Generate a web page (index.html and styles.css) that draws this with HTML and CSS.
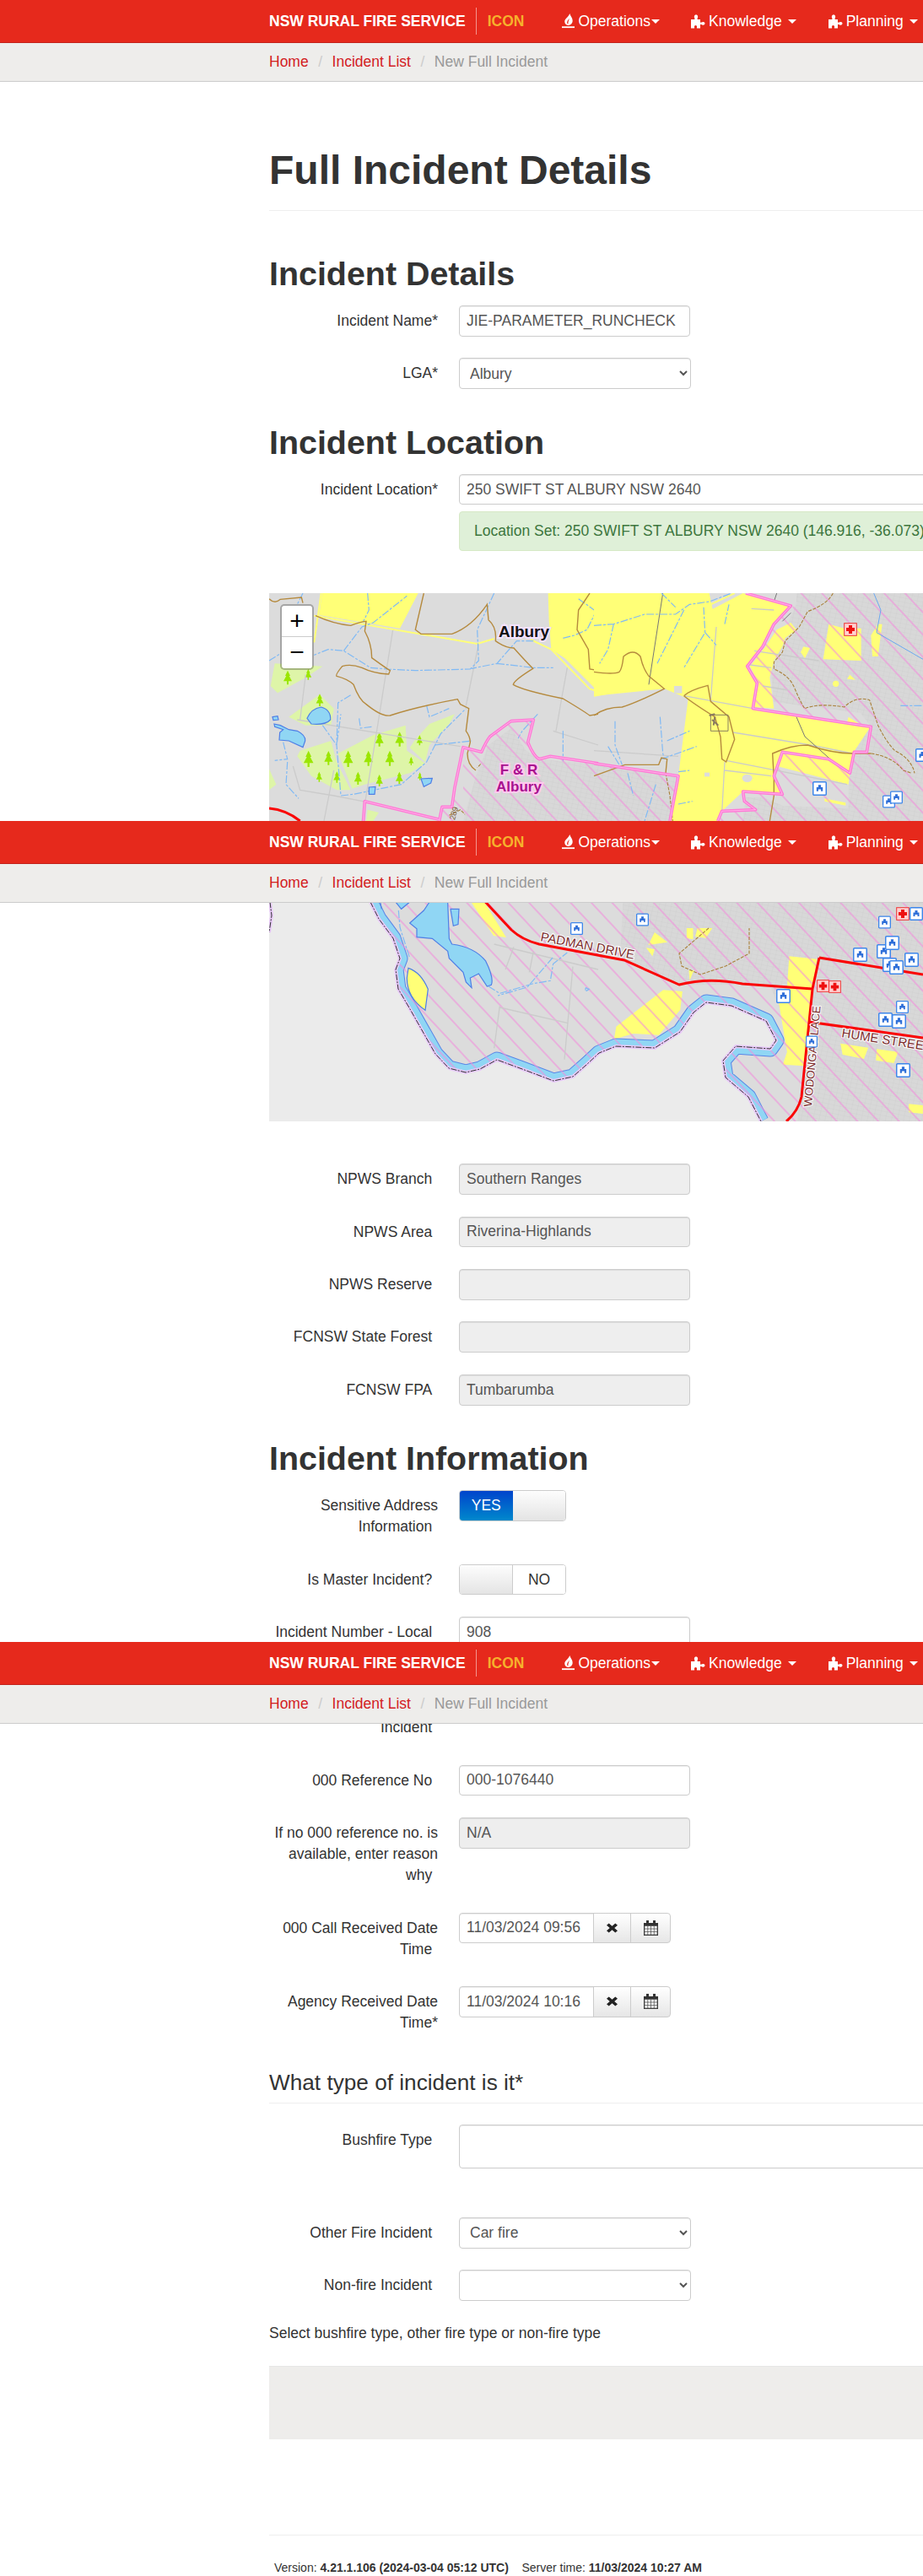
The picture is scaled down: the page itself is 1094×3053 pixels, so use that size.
FILE: index.html
```html
<!DOCTYPE html>
<html lang="en">
<head>
<meta charset="utf-8">
<title>Full Incident Details</title>
<link rel="stylesheet" href="styles.css">
</head>
<body>
<svg class="defs" width="0" height="0">
  <defs>
    <symbol id="flame" viewBox="0 0 16 20" preserveAspectRatio="none"><path fill-rule="evenodd" d="M10 0C10.500 3 13.500 5.500 13.500 9.500 13.500 13 11 15.500 8 15.500 5 15.500 3.500 13 3.500 10.500 3.500 7 8 5 10 0ZM9.500 6.500C8 8.500 6.500 10 6.500 12 6.500 13 7.200 13.800 8 14 7.500 12 8.500 9.500 9.500 6.500Z"/><rect x="0" y="17" width="16" height="2"/></symbol>
    <symbol id="puzzle" viewBox="0 0 17 17"><path d="M0 6H3.500C4.500 6 4.800 5.300 4.300 4.500 3.500 3.300 3.600 0.500 6 0.500S8.500 3.300 7.700 4.500C7.200 5.300 7.500 6 8.500 6H11V9C11 9.800 11.700 10 12.300 9.500 13.500 8.600 16.500 8.600 16.500 10.800S13.500 13 12.300 12.100C11.700 11.600 11 11.800 11 12.600V16.500H7.500C6.700 16.500 6.700 15.800 7 15.200 7.500 14 6.500 13 5.500 13S3.500 14 4 15.200C4.300 15.800 4.300 16.500 3.500 16.500H0Z"/></symbol>
    <symbol id="map-icon" viewBox="0 0 16 16"><rect class="mi-box" x="0.700" y="0.700" width="14.600" height="14.600" rx="1"/><path class="mi-fig" d="M6.500 4H9.500V6.500H11.500V11H9.500V9H6.500V11H4.500V6.500H6.500Z"/></symbol>
    <symbol id="map-red" viewBox="0 0 16 16"><rect class="mr-box" x="0.700" y="0.700" width="14.600" height="14.600"/><path class="mr-cross" d="M6 3H10V6H13V10H10V13H6V10H3V6H6Z"/></symbol>
    <symbol id="tree" viewBox="-16 -26 32 50" overflow="visible"><path class="tree-shape" d="M0-26 9-7H5L15 12H3V24H-3V12H-15L-5-7H-9Z"/></symbol>
  </defs>
</svg>

<header class="topbar">
  <nav class="navbar">
    <a class="brand">NSW RURAL FIRE SERVICE</a>
    <span class="app-name">ICON</span>
    <a class="nav-item nav-ops"><svg class="nav-ic ic-flame"><use href="#flame"/></svg>Operations<i class="caret caret-tight"></i></a>
    <a class="nav-item nav-know"><svg class="nav-ic"><use href="#puzzle"/></svg>Knowledge<i class="caret"></i></a>
    <a class="nav-item nav-plan"><svg class="nav-ic"><use href="#puzzle"/></svg>Planning<i class="caret"></i></a>
  </nav>
  <div class="crumbs"><a>Home</a><span class="sep">/</span><a>Incident List</a><span class="sep">/</span><span class="current">New Full Incident</span></div>
</header>

<main class="page">
  <div class="page-header"><h1>Full Incident Details</h1></div>

  <h2 class="first-h2">Incident Details</h2>
  <div class="row"><label>Incident Name*</label><input class="ctl" value="JIE-PARAMETER_RUNCHECK"></div>
  <div class="row"><label>LGA*</label><select class="ctl sel"><option>Albury</option></select></div>

  <h2>Incident Location</h2>
  <div class="row">
    <label>Incident Location*</label>
    <div class="wide">
      <input class="ctl" value="250 SWIFT ST ALBURY NSW 2640">
      <div class="alert">Location Set: 250 SWIFT ST ALBURY NSW 2640 (146.916, -36.073)</div>
    </div>
  </div>

  <div class="map">
    <svg class="map-svg" width="775" height="626" viewBox="319 703 775 626">
      <defs>
        <pattern id="hatch" patternUnits="userSpaceOnUse" width="18" height="18" patternTransform="rotate(47)"><line class="hatch-line" x1="0" y1="1" x2="18" y2="1"/></pattern>
        <pattern id="mesh" patternUnits="userSpaceOnUse" width="7" height="5" patternTransform="rotate(12)"><rect class="mesh-bg" width="7" height="5"/><path class="mesh-line" d="M0 0H7M0 0V5"/></pattern>
      </defs>
      <rect class="land" x="319" y="703" width="775" height="626"/>

      <!-- top-left tile -->
      <g transform="translate(319 703) scale(.33333)">
        <polygon class="yellow" points="188,0 530,0 465,125 178,78"/>
        <polygon class="yellow" points="992,0 1170,0 1170,350 1050,230 1003,200 995,100"/>
        <polygon class="forest" points="20,250 190,260 130,300 30,355 5,330"/>
        <polygon class="forest" points="70,440 180,360 230,410 220,470 130,470"/>
        <polygon class="forest" points="100,580 110,560 220,525 240,600 290,700 240,700 150,650"/>
        <polygon class="forest" points="245,570 370,505 485,470 490,560 555,605 500,640 340,680 295,695"/>
        <polygon class="forest" points="520,520 570,465 660,430 640,465 570,540 555,600 500,550"/>
        <polygon class="forest" points="0,625 25,680 0,700"/>
        <use href="#tree" x="50" y="275" width="32" height="50"/><use href="#tree" x="125" y="270" width="28" height="38"/>
        <use href="#tree" x="165" y="358" width="30" height="44"/><use href="#tree" x="375" y="495" width="34" height="50"/>
        <use href="#tree" x="447" y="492" width="34" height="54"/><use href="#tree" x="520" y="505" width="30" height="36"/>
        <use href="#tree" x="120" y="560" width="40" height="58"/><use href="#tree" x="195" y="560" width="32" height="52"/>
        <use href="#tree" x="262" y="560" width="38" height="58"/><use href="#tree" x="335" y="560" width="36" height="54"/>
        <use href="#tree" x="410" y="560" width="38" height="54"/><use href="#tree" x="490" y="582" width="30" height="30"/>
        <use href="#tree" x="163" y="635" width="30" height="36"/><use href="#tree" x="228" y="632" width="26" height="44"/>
        <use href="#tree" x="300" y="635" width="32" height="46"/><use href="#tree" x="375" y="645" width="34" height="42"/>
        <use href="#tree" x="447" y="635" width="32" height="44"/><use href="#tree" x="525" y="637" width="22" height="28"/>
        <path class="road" d="M440,130 L370,570 L330,810M745,180 L700,400 M100,450 L680,545 M130,290 L110,450 M230,630 L195,810 M1060,265 L1040,375 L1020,490 M85,615 L110,700 L230,720 L360,745 M1010,490 L1170,540"/>
        <path class="road-cream" d="M160,80 L740,180 L800,162 M930,165 L1003,200 L1140,340 L1170,350 M185,0 L160,175"/>
        <path class="stream" d="M800,0 L740,130 L745,240 L715,270 L520,275 L420,270 L360,265 L265,205 L210,200 L160,220 M940,170 L880,170 L810,250 L720,268 M810,250 L940,265 L1010,265 M265,205 L330,120 L370,105 L490,10 M350,0 L355,60 L335,100 M120,0 L100,40 M290,362 L245,390 L240,540 L255,720 L300,715 L470,680 L560,600 L610,500 L700,410 M190,470 L240,540 L255,430 M0,240 L40,215 M320,445 L325,480 L365,475 M560,400 L570,440 L640,410 M50,530 L65,590 L20,595 M65,600 L60,680 L105,730 M1045,490 L1045,600 M955,430 L900,490 L860,560 M1045,160 L1085,150 L1130,130 L1170,50 M1100,20 L1170,70 M590,540 L720,525"/>
        <path class="contour" d="M0,20 Q20,40 40,22 L115,15 L120,35 M165,80 Q230,110 290,115 Q330,100 345,100 L340,135 Q365,180 365,230 Q420,270 430,275 L425,288 Q370,285 330,265 Q290,250 260,260 Q235,290 240,295 Q280,305 300,325 Q320,380 345,395 Q400,440 430,435 Q520,405 670,377 L680,395 L710,410 L700,490 Q715,510 715,530 L705,570 Q705,610 735,630"/>
        <path class="contour" d="M550,0 L520,130 L540,145 L650,145 Q720,120 775,40 L780,95 Q810,120 805,170 Q840,195 870,195 Q910,240 938,268 Q870,310 868,325 Q900,345 1045,375 Q1120,420 1140,435 L1170,430"/>
        <path class="contour" d="M1140,0 L1100,60 L1095,130 L1135,200 L1140,270 L1170,275"/>
        <path class="contour-dash" d="M855,500 L780,580 L740,620 M855,500 Q880,540 900,580 M975,725 L1040,690 L1060,720 L1080,770 L1120,780 L1150,700 M640,790 L680,770 L700,790"/>
        <path class="lake" d="M135,445 Q150,410 185,405 Q220,415 218,450 Q200,470 150,465Z"/>
        <path class="lake" d="M12,440 L30,437 L33,450 L15,452Z M18,465 L40,470 L70,485 L100,490 Q130,505 128,525 L120,548 L70,525 L36,522 L38,495 L50,485 L20,475Z"/>
        <path class="lake" d="M355,690 L378,688 L375,715 L355,715Z M540,660 L580,658 L575,675 L550,688Z"/>
        <polygon class="forest" points="350,770 390,780 370,810 345,810"/>
      </g>

      <!-- top-right tile -->
      <g transform="translate(704 703) scale(.33333)">
        <polygon class="yellow" points="0,0 410,0 435,120 415,60 530,0 700,45 640,110 600,190 545,260 580,320 565,410 985,475 970,565 925,565 910,640 835,590 670,565 640,650 670,715 530,705 455,775 440,810 265,810 300,650 335,375 250,340 0,365"/>
      </g>
      <polygon class="meshed" points="944,703 1094,703 1094,973 1005,973 1006,930 1012,891 1032,861 1020,845 917,832 914,796 924,760 944,716"/>
      <polygon class="meshed" points="549,973 564,920 579,883 606,863 624,890 642,900 709,906 804,920 794,973"/>
      <polygon class="meshed" points="880,973 884,945 905,945 928,955 1005,958 1005,973"/>
      <polygon class="meshed" points="740,1040 1094,1040 1094,1329 945,1329 958,1200 925,1197 912,1167 806,1167 735,1133"/>
      <g transform="translate(704 703) scale(.33333)">
        <polygon class="yellow" points="835,110 890,125 950,125 950,240 815,235"/>
        <polygon class="yellow" points="1010,110 1025,110 1010,225 990,225 985,150"/>
        <polygon class="yellow" points="650,130 700,105 720,130 680,160 670,190 640,240 625,300 640,410 570,405 585,320 555,260 610,190"/>
        <polygon class="yellow" points="745,190 768,195 750,232 735,210"/>
        <polygon class="yellow" points="905,440 945,465 900,460"/>
        <polygon class="yellow" points="900,305 910,290 930,308"/>
        <polygon class="yellow" points="820,730 895,745 895,755 820,740"/>
        <polygon class="yellow" points="670,570 835,590 910,640 905,680 650,615"/>
        <circle class="yellow" cx="860" cy="322" r="11"/>
        <ellipse class="land" cx="545" cy="658" rx="18" ry="14"/>
        <rect class="land" x="393" y="638" width="18" height="14"/>
        <rect class="land" x="285" y="330" width="28" height="26"/>
      </g>

      <!-- lower tile: yellow and river -->
      <g transform="translate(300 1100) scale(.50630 .33333)">
        <polygon class="yellow" points="1255,100 1320,110 1310,215 1300,430 1290,490 1240,485 1250,440 1230,260 1250,210"/>
        <polygon class="yellow" points="940,15 970,50 925,60"/>
        <polygon class="yellow" points="920,70 940,75 935,100"/>
        <polygon class="yellow" points="1015,0 1030,0 1030,40 1015,35"/>
        <polygon class="yellow" points="1040,0 1075,0 1060,35 1035,30"/>
        <polygon class="yellow" points="850,350 960,220 1005,225 1000,290 950,380 890,375 845,395"/>
        <polygon class="yellow" points="1375,410 1440,425 1430,465 1380,450"/>
        <polygon class="yellow" points="1460,430 1510,440 1500,480 1458,470"/>
        <polygon class="yellow" points="1535,625 1568,630 1568,660 1535,655"/>
        <polygon class="yellow" points="1020,150 1032,150 1022,185"/>
      </g>
      <polygon class="yellow" points="539,1040 556,1040 600,1111 585,1109"/>
      <path class="river-edge" d="M439,1069 449,1089 466,1112 474,1136 469,1149 472,1172 486,1196 516,1249 532,1266 552,1271 569,1267 589,1256 619,1267 656,1281 679,1276 695,1262 710,1248 730,1240 776,1242 806,1223 822,1200 837,1188 867,1192 908,1210 920,1233 913,1243 872,1240 857,1257 860,1277 887,1300 902,1329"/>
      <path class="river" d="M439,1069 449,1089 466,1112 474,1136 469,1149 472,1172 486,1196 516,1249 532,1266 552,1271 569,1267 589,1256 619,1267 656,1281 679,1276 695,1262 710,1248 730,1240 776,1242 806,1223 822,1200 837,1188 867,1192 908,1210 920,1233 913,1243 872,1240 857,1257 860,1277 887,1300 902,1329"/>

      <!-- hatching over urban and lower land -->
      <polygon class="hatched" points="549,886 571,891 581,873 606,855 632,853 626,880 639,900 652,896 804,920 794,973 524,973 524,956 549,940"/>
      <polygon class="hatched" points="945,703 1094,703 1094,973 851,973 856,961 896,960 882,950 881,938 927,941 917,920 927,891 982,900 1007,916 1012,891 1027,891 1032,861 892,840 897,810 886,790 904,766 917,740 941,718"/>
      <polygon class="hatched" points="439,1040 1094,1040 1094,1329 439,1329"/>

      <!-- outside NSW -->
      <polygon class="south" points="319,1040 430,1040 439,1069 449,1089 466,1112 474,1136 469,1149 472,1172 486,1196 516,1249 532,1266 552,1271 569,1267 589,1256 619,1267 656,1281 679,1276 695,1262 710,1248 730,1240 776,1242 806,1223 822,1200 837,1188 867,1192 908,1210 920,1233 913,1243 872,1240 857,1257 860,1277 887,1300 902,1329 319,1329"/>
      <path class="border-halo" d="M439,1069 449,1089 466,1112 474,1136 469,1149 472,1172 486,1196 516,1249 532,1266 552,1271 569,1267 589,1256 619,1267 656,1281 679,1276 695,1262 710,1248 730,1240 776,1242 806,1223 822,1200 837,1188 867,1192 908,1210 920,1233 913,1243 872,1240 857,1257 860,1277 887,1300 902,1329 M320,1069 L322,1085 L319,1105"/>
      <path class="border-line" d="M439,1069 449,1089 466,1112 474,1136 469,1149 472,1172 486,1196 516,1249 532,1266 552,1271 569,1267 589,1256 619,1267 656,1281 679,1276 695,1262 710,1248 730,1240 776,1242 806,1223 822,1200 837,1188 867,1192 908,1210 920,1233 913,1243 872,1240 857,1257 860,1277 887,1300 902,1329 M320,1069 L322,1085 L319,1105"/>

      <!-- lines on the top-right tile -->
      <g transform="translate(704 703) scale(.33333)">
        <path class="road" d="M435,120 L415,380 M320,365 L565,410 M495,495 L770,540 L920,570 M470,595 L900,680 M465,630 L630,650 M465,600 L455,780 M0,560 L300,580 M560,55 L640,60 M570,205 L800,240 M555,255 L630,265 M600,330 L690,345"/>
        <path class="road-cream" d="M190,330 L0,365 M415,40 L500,0"/>
        <path class="road-dark" d="M245,0 L195,325 M650,0 L640,30 M720,440 L750,510 L840,590 M670,100 L700,70"/>
        <path class="stream" d="M0,115 L70,110 L180,75 L290,75 L340,40 L410,30 L490,0 M240,0 L290,50 M70,110 L50,200 L20,250 M320,60 L225,250 M390,50 L395,140 L320,265 M395,140 L435,185 M75,455 L75,540 L100,610 M50,545 L90,610 M235,440 L245,570 L250,590 M260,525 L340,490 M240,590 L365,545 M300,635 L340,630 M465,110 L480,40 M120,640 L140,720 M220,680 L180,810 M300,750 L350,740 M1090,400 L1170,400"/>
        <path class="stream-solid" d="M995,0 L1020,60 L1005,140 L1170,235"/>
        <path class="contour" d="M0,280 Q70,290 90,280 Q100,270 105,225 Q140,195 165,225 Q175,270 195,295 L250,340 Q150,390 100,405 Q40,405 0,435"/>
        <path class="contour" d="M320,365 Q340,345 405,328 L415,385 L480,440 L500,520 L470,600 L455,590 L450,510 L430,440 Q350,390 320,365"/>
        <path class="contour" d="M640,660 L635,570 Q700,540 760,540 Q850,570 920,570 L985,570 M640,660 L640,720 L625,810"/>
        <path class="contour" d="M0,650 L110,610 L230,610 L240,585 L260,590 L255,640"/>
        <path class="contour-dash" d="M850,0 Q830,40 760,65 L730,120 Q700,150 680,170 L670,210 L640,245 L640,270 Q690,290 710,330 Q740,400 750,410 Q800,390 890,405 Q930,365 980,380 L1010,470 Q1040,530 1070,560 Q1130,590 1140,640 M985,570 Q1060,580 1100,630 L1130,640 M255,640 L270,720 L280,810"/>
        <rect class="town-box" x="415" y="433" width="62" height="57"/>
        <path class="town-dots" d="M410,435 L430,430 M420,450 L442,470 M430,440 L425,470"/>
      </g>

      <!-- F&R boundaries -->
      <g transform="translate(319 703) scale(.33333)">
        <path class="bound" d="M605,810 L615,760 L650,760 L660,690 L690,548 L755,565 Q770,530 785,510 L860,455 L940,450 L920,530 Q940,580 960,590 L1000,580 L1170,605 M335,810 L340,740 L605,805"/>
        <path class="bound-inner" d="M605,810 L615,760 L650,760 L660,690 L690,548 L755,565 Q770,530 785,510 L860,455 L940,450 L920,530 Q940,580 960,590 L1000,580 L1170,605 M335,810 L340,740 L605,805"/>
        <path class="road-red" d="M0,765 Q60,770 110,810"/>
        <text class="town-no" transform="translate(660 808) rotate(-75)">289</text>
      </g>
      <g transform="translate(704 703) scale(.33333)">
        <path class="bound" d="M540,0 L700,45 L640,110 L600,190 L545,260 L580,320 L565,410 L985,475 L970,565 L925,565 L910,640 L835,590 L670,565 L640,650 L670,715 L530,705 L535,740 L575,770 L455,775 L440,810 M0,605 L300,650 L270,810"/>
        <path class="bound-inner" d="M540,0 L700,45 L640,110 L600,190 L545,260 L580,320 L565,410 L985,475 L970,565 L925,565 L910,640 L835,590 L670,565 L640,650 L670,715 L530,705 L535,740 L575,770 L455,775 L440,810 M0,605 L300,650 L270,810"/>
      </g>

      <!-- lower tile detail -->
      <g transform="translate(319 1069) scale(.33333)">
        <path class="lake" d="M500,75 L550,30 L570,0 L635,0 L640,130 L650,150 Q730,160 770,210 Q800,270 790,295 L775,300 L745,255 L715,270 L720,305 L700,285 L690,250 L640,200 L635,175 L580,130 L525,125 L525,95Z"/>
        <path class="lake" d="M645,25 L675,25 L672,80 L655,85Z M395,0 L400,25 M450,0 L500,0 L470,25Z"/>
        <path class="lake-yellow" d="M495,235 Q540,250 565,310 L555,385 Q490,340 490,270Z"/>
        <path class="stream" d="M460,30 L465,90 L500,200 M780,300 L820,325 L940,290 L1000,280 L1010,220 L1060,180 M1125,305 L1138,310 L1125,318Z"/>
        <path class="road" d="M820,370 L800,520 M820,375 L1060,430 M1080,230 L1050,560 M800,150 L1170,240 M870,160 L840,240 M940,175 L925,250"/>
      </g>
      <path class="road-red" d="M567,1060 L606,1102 Q619,1114 639,1119 L740,1138 L805,1167 Q840,1158 880,1166 L963,1172 M971,1135 L1094,1155 M971,1135 L963,1172 L950,1300 Q946,1317 932,1329 M958,1211 L1094,1230"/>
      <path class="stream" d="M655,1135 L625,1170 L590,1180"/>
      <path class="contour-dash" d="M840,1100 L805,1130 L808,1145 L830,1155 L860,1145 L888,1130 L888,1100"/>
      <text class="street street-lg" transform="translate(640 1115) rotate(11)">PADMAN DRIVE</text>
      <text class="street street-lg" transform="translate(997 1229) rotate(9)">HUME STREET</text>
      <text class="street" transform="translate(962 1312) rotate(-85)">WODONGA PLACE</text>

      <text class="place" x="621" y="755">Albury</text>
      <text class="zone" x="615" y="918">F &amp; R</text>
      <text class="zone" x="615" y="938">Albury</text>

      <use href="#map-red" x="1000" y="738" width="16" height="16"/>
      <use href="#map-icon" x="963" y="926" width="17" height="17"/>
      <use href="#map-icon" x="1046" y="942" width="15" height="16"/>
      <use href="#map-icon" x="1055" y="937" width="15" height="16"/>
      <use href="#map-icon" x="1085" y="887" width="16" height="16"/>
      <use href="#map-icon" x="754" y="1082" width="15" height="16"/>
      <use href="#map-icon" x="676" y="1093" width="15" height="15"/>
      <use href="#map-icon" x="1041" y="1085" width="15" height="16"/>
      <use href="#map-red" x="1062" y="1075" width="16" height="16"/>
      <use href="#map-icon" x="1078" y="1075" width="16" height="16"/>
      <use href="#map-icon" x="920" y="1172" width="17" height="17"/>
      <use href="#map-icon" x="1011" y="1123" width="17" height="17"/>
      <use href="#map-icon" x="1039" y="1119" width="17" height="17"/>
      <use href="#map-icon" x="1049" y="1109" width="17" height="17"/>
      <use href="#map-icon" x="1046" y="1135" width="17" height="17"/>
      <use href="#map-icon" x="1054" y="1138" width="17" height="17"/>
      <use href="#map-icon" x="1072" y="1129" width="17" height="17"/>
      <use href="#map-icon" x="1061" y="1186" width="17" height="15"/>
      <use href="#map-icon" x="1041" y="1200" width="17" height="17"/>
      <use href="#map-icon" x="1057" y="1202" width="17" height="17"/>
      <use href="#map-icon" x="1062" y="1260" width="17" height="17"/>
      <use href="#map-icon" x="955" y="1226" width="14" height="17"/>
      <use href="#map-red" x="968" y="1161" width="15" height="15"/>
      <use href="#map-red" x="982" y="1162" width="15" height="15"/>
    </svg>
    <div class="zoom-ctl"><span class="zoom-btn">+</span><span class="zoom-btn">&minus;</span></div>
  </div>

  <div class="row"><label>NPWS Branch<span class="star">*</span></label><input class="ctl" disabled value="Southern Ranges"></div>
  <div class="row"><label>NPWS Area<span class="star">*</span></label><input class="ctl" disabled value="Riverina-Highlands"></div>
  <div class="row"><label>NPWS Reserve<span class="star">*</span></label><input class="ctl" disabled></div>
  <div class="row"><label>FCNSW State Forest<span class="star">*</span></label><input class="ctl" disabled></div>
  <div class="row"><label>FCNSW FPA<span class="star">*</span></label><input class="ctl" disabled value="Tumbarumba"></div>

  <h2>Incident Information</h2>
  <div class="row"><label>Sensitive Address Information<span class="star">*</span></label>
    <div class="switch"><span class="sw-on">YES</span><span class="sw-blank"></span></div></div>
  <div class="row"><label>Is Master Incident?<span class="star">*</span></label>
    <div class="switch"><span class="sw-blank sw-blank-left"></span><span class="sw-off">NO</span></div></div>
  <div class="row"><label><span class="label-line">Incident Number - Local<span class="star">*</span></span><span class="label-gap"></span><span class="label-line">Incident<span class="star">*</span></span></label><input class="ctl" value="908"></div>
  <div class="row"><label>000 Reference No<span class="star">*</span></label><input class="ctl" value="000-1076440"></div>
  <div class="row"><label>If no 000 reference no. is available, enter reason why<span class="star">*</span></label><input class="ctl" disabled value="N/A"></div>
  <div class="row"><label>000 Call Received Date Time<span class="star">*</span></label>
    <div class="date-group">
      <input class="ctl" value="11/03/2024 09:56">
      <button class="addon"><svg class="ic-x" viewBox="0 0 12 13" preserveAspectRatio="none"><path d="M2.500 0.500 6 4 9.500 0.500 12 3 8.500 6.500 12 10 9.500 12.500 6 9 2.500 12.500 0 10 3.500 6.500 0 3Z"/></svg></button>
      <button class="addon addon-last"><svg class="ic-cal" viewBox="0 0 17 18"><path class="cal-fill" d="M0 3H17V18H0Z"/><path class="cal-grid" d="M1 6.500H16V17H1ZM1 10H16M1 13.500H16M4.750 6.500V17M8.500 6.500V17M12.250 6.500V17"/><path class="cal-fill" d="M3 0H6V5H3ZM11 0H14V5H11Z"/></svg></button>
    </div></div>
  <div class="row"><label>Agency Received Date Time*</label>
    <div class="date-group">
      <input class="ctl" value="11/03/2024 10:16">
      <button class="addon"><svg class="ic-x" viewBox="0 0 12 13" preserveAspectRatio="none"><path d="M2.500 0.500 6 4 9.500 0.500 12 3 8.500 6.500 12 10 9.500 12.500 6 9 2.500 12.500 0 10 3.500 6.500 0 3Z"/></svg></button>
      <button class="addon addon-last"><svg class="ic-cal" viewBox="0 0 17 18"><path class="cal-fill" d="M0 3H17V18H0Z"/><path class="cal-grid" d="M1 6.500H16V17H1ZM1 10H16M1 13.500H16M4.750 6.500V17M8.500 6.500V17M12.250 6.500V17"/><path class="cal-fill" d="M3 0H6V5H3ZM11 0H14V5H11Z"/></svg></button>
    </div></div>

  <h3>What type of incident is it*</h3>
  <div class="row row-bush"><label>Bushfire Type<span class="star">*</span></label><div class="multi"></div></div>
  <div class="row"><label>Other Fire Incident<span class="star">*</span></label><select class="ctl sel"><option>Car fire</option></select></div>
  <div class="row"><label>Non-fire Incident<span class="star">*</span></label><select class="ctl sel"><option></option></select></div>
  <p class="hint">Select bushfire type, other fire type or non-fire type</p>
  <div class="panel"></div>

  <footer class="foot">Version: <b>4.21.1.106 (2024-03-04 05:12 UTC)</b> &nbsp; &nbsp;Server time: <b>11/03/2024 10:27 AM</b></footer>
</main>

<header class="topbar topbar-2">
  <nav class="navbar">
    <a class="brand">NSW RURAL FIRE SERVICE</a>
    <span class="app-name">ICON</span>
    <a class="nav-item nav-ops"><svg class="nav-ic ic-flame"><use href="#flame"/></svg>Operations<i class="caret caret-tight"></i></a>
    <a class="nav-item nav-know"><svg class="nav-ic"><use href="#puzzle"/></svg>Knowledge<i class="caret"></i></a>
    <a class="nav-item nav-plan"><svg class="nav-ic"><use href="#puzzle"/></svg>Planning<i class="caret"></i></a>
  </nav>
  <div class="crumbs"><a>Home</a><span class="sep">/</span><a>Incident List</a><span class="sep">/</span><span class="current">New Full Incident</span></div>
</header>
<header class="topbar topbar-3">
  <nav class="navbar">
    <a class="brand">NSW RURAL FIRE SERVICE</a>
    <span class="app-name">ICON</span>
    <a class="nav-item nav-ops"><svg class="nav-ic ic-flame"><use href="#flame"/></svg>Operations<i class="caret caret-tight"></i></a>
    <a class="nav-item nav-know"><svg class="nav-ic"><use href="#puzzle"/></svg>Knowledge<i class="caret"></i></a>
    <a class="nav-item nav-plan"><svg class="nav-ic"><use href="#puzzle"/></svg>Planning<i class="caret"></i></a>
  </nav>
  <div class="crumbs"><a>Home</a><span class="sep">/</span><a>Incident List</a><span class="sep">/</span><span class="current">New Full Incident</span></div>
</header>
</body>
</html>
```

FILE: styles.css
```css
* { box-sizing: border-box; }
html, body { margin: 0; padding: 0; }
body {
  position: relative;
  width: 1094px;
  overflow: hidden;
  background: #fff;
  color: #333;
  font-family: "Liberation Sans", Arial, sans-serif;
  font-size: 17.5px;
  line-height: 25px;
}
.defs { position: absolute; }

/* header */
.topbar { background: #fff; width: 100%; }
.topbar-2, .topbar-3 { position: absolute; left: 0; z-index: 5; }
.topbar-2 { top: 973px; }
.topbar-3 { top: 1946px; }
.navbar {
  display: flex;
  align-items: center;
  height: 51px;
  padding-left: 319px;
  background: #e6291c;
  border-bottom: 1px solid #c2211a;
  color: #fff;
  white-space: nowrap;
}
.brand { font-weight: 700; }
.app-name {
  margin-left: 12px;
  padding: 3px 0 3px 13px;
  border-left: 1px solid rgba(255,255,255,.5);
  color: #f6b12c;
  font-weight: 700;
  line-height: 26px;
}
.nav-item { display: flex; align-items: center; }
.nav-ops { margin-left: 45px; }
.nav-know { margin-left: 37px; }
.nav-plan { margin-left: 38px; }
.nav-ic { width: 17px; height: 17px; margin-right: 4px; fill: #fff; }
.ic-flame { width: 15px; height: 18px; margin-right: 4px; }
.caret {
  width: 0; height: 0;
  margin-left: 7px;
  border-top: 5px solid #fff;
  border-left: 5px solid transparent;
  border-right: 5px solid transparent;
}
.caret-tight { margin-left: 1px; }
.crumbs {
  height: 46px;
  padding: 10px 0 0 319px;
  background: #eeedeb;
  border-bottom: 1px solid #ccc;
  color: #999;
  white-space: nowrap;
}
.crumbs a { color: #d3201f; }
.sep { color: #ccc; padding: 0 11.5px; }

/* page */
.page { width: 1140px; padding-left: 319px; }
.page-header { margin-top: 78.7px; padding-bottom: 22px; border-bottom: 1px solid #eee; }
h1 { margin: 0; font-size: 48px; line-height: 51px; font-weight: 700; }
h2 { margin: 42.9px 0 16.8px; font-size: 39.4px; line-height: 41px; font-weight: 700; }
.first-h2 { margin-top: 54.5px; }
h3 {
  margin: 37.9px 0 25px;
  padding-bottom: 9px;
  border-bottom: 1px solid #eee;
  font-size: 26.2px;
  line-height: 29px;
  font-weight: 400;
}

/* form rows */
.row {
  display: grid;
  grid-template-columns: 200px 1fr;
  column-gap: 25px;
  align-items: start;
  margin-bottom: 25.9px;
}
label { padding: 6px 0 5.6px; text-align: right; font-weight: 400; }
.star { visibility: hidden; }
.label-line { display: block; }
.label-gap { display: block; height: 88px; }
.ctl {
  display: block;
  width: 274px;
  height: 36.6px;
  padding: 0 8px;
  background: #fff;
  border: 1px solid #ccc;
  border-radius: 4px;
  box-shadow: inset 0 1px 1px rgba(0,0,0,.075);
  color: #555;
  font-family: inherit;
  font-size: 17.5px;
}
.ctl:disabled { background: #eee; color: #555; opacity: 1; }
.sel { width: 275px; padding: 0 8px; }
.wide .ctl { width: 100%; }
.alert {
  margin-top: 7.7px;
  height: 46.7px;
  padding: 10px 0 0 17px;
  background: #dff0d8;
  border: 1px solid #d6e9c6;
  border-radius: 4px;
  color: #3c763d;
}

/* map */
.map { position: relative; margin: 50.3px 0 50px; width: 775px; height: 626px; }
.map-svg { display: block; }
.map-svg path, .map-svg polygon, .map-svg rect, .map-svg circle, .map-svg ellipse { vector-effect: non-scaling-stroke; }
.land { fill: #dcdcdc; }
.yellow { fill: #ffff77; }
.forest { fill: #def5a8; }
.tree-shape { fill: #9be600; }
.mesh-bg { fill: #d8d8d8; }
.mesh-line { stroke: #c8c8c8; stroke-width: .6; fill: none; }
.meshed { fill: url(#mesh); }
.hatch-line { stroke: #f28cdc; stroke-width: 1.1; }
.hatched { fill: url(#hatch); }
.south { fill: #ebebeb; }
.road { fill: none; stroke: #cbcbcb; stroke-width: 1.3; }
.road-cream { fill: none; stroke: #ffff77; stroke-width: 2; }
.road-dark { fill: none; stroke: #777; stroke-width: 1; }
.road-red { fill: none; stroke: #fa0505; stroke-width: 3; }
.stream { fill: none; stroke: #80baf5; stroke-width: 1.2; stroke-dasharray: 9 2 3 2; }
.stream-solid { fill: none; stroke: #6aa8f0; stroke-width: 1; }
.contour { fill: none; stroke: #b58a3e; stroke-width: 1.4; }
.contour-dash { fill: none; stroke: #a9803a; stroke-width: 1.1; stroke-dasharray: 4 1.500; }
.lake { fill: #90d6f4; stroke: #4f7fe6; stroke-width: 1.2; }
.lake-yellow { fill: #ffff77; stroke: #4f7fe6; stroke-width: 1.2; }
.river-edge { fill: none; stroke: #5a86e6; stroke-width: 19; stroke-linejoin: round; }
.river { fill: none; stroke: #90d6f4; stroke-width: 17; stroke-linejoin: round; }
.border-halo { fill: none; stroke: #e8c9f8; stroke-width: 4; stroke-linejoin: round; }
.border-line { fill: none; stroke: #333; stroke-width: 1; stroke-dasharray: 7 1.500 2 1.500; stroke-linejoin: round; }
.bound { fill: none; stroke: #ff79d6; stroke-width: 3.6; stroke-linejoin: round; }
.bound-inner { fill: none; stroke: #ffc4ec; stroke-width: .8; stroke-linejoin: round; }
.town-box { fill: none; stroke: #8a8060; stroke-width: 1; }
.town-dots { fill: none; stroke: #8a7a60; stroke-width: 2; }
.town-no { font-size: 28px; fill: #7a5a3a; font-family: "Liberation Sans", Arial, sans-serif; }
.mi-box { fill: #fff; stroke: #3d86ea; stroke-width: 1.400; }
.mi-fig { fill: #2f6fd8; }
.mr-box { fill: #ffd0d0; stroke: #ee3333; stroke-width: 1; }
.mr-cross { fill: #ee1111; }
.street {
  font-size: 13.5px;
  fill: #7c2c2c;
  stroke: #fff;
  stroke-width: 2px;
  paint-order: stroke;
  font-family: "Liberation Sans", Arial, sans-serif;
}
.street-lg { font-size: 15px; }
.place {
  font-size: 19px;
  font-weight: 700;
  text-anchor: middle;
  fill: #111;
  stroke: #f4e2ff;
  stroke-width: 4px;
  paint-order: stroke;
  font-family: "Liberation Sans", Arial, sans-serif;
}
.zone {
  font-size: 17px;
  font-weight: 700;
  text-anchor: middle;
  fill: #a8128f;
  stroke: #ffc8ee;
  stroke-width: 4px;
  paint-order: stroke;
  font-family: "Liberation Sans", Arial, sans-serif;
}
.zoom-ctl {
  position: absolute;
  left: 13px;
  top: 13px;
  width: 40px;
  display: flex;
  flex-direction: column;
  background: #fff;
  border: 2px solid rgba(0,0,0,.25);
  border-radius: 5px;
  background-clip: padding-box;
}
.zoom-btn {
  height: 37px;
  color: #000;
  font-size: 30px;
  line-height: 36px;
  text-align: center;
}
.zoom-btn:first-child { border-bottom: 1px solid #ccc; }

/* switches */
.switch {
  display: flex;
  width: 127px;
  height: 36.6px;
  border: 1px solid #ccc;
  border-radius: 4px;
  overflow: hidden;
}
.switch span { flex: 1; text-align: center; line-height: 34px; }
.sw-on { background: linear-gradient(#0044cc, #0088cc); color: #fff; }
.sw-blank { background: linear-gradient(#fdfdfd, #e4e4e4); }
.sw-blank-left { border-right: 1px solid #ccc; }
.sw-off { background: #fff; color: #333; }

/* date inputs */
.date-group { display: flex; }
.date-group .ctl { width: 160px; border-radius: 4px 0 0 4px; }
.addon {
  display: flex;
  align-items: center;
  justify-content: center;
  width: 45px;
  height: 36.6px;
  margin-left: -1px;
  padding: 0;
  background: linear-gradient(#fff, #e6e6e6);
  border: 1px solid #ccc;
}
.addon-last { width: 48px; border-radius: 0 4px 4px 0; }
.ic-x { width: 13px; height: 12px; fill: #222; }
.ic-cal { width: 17px; height: 18px; }
.cal-fill { fill: #333; }
.cal-grid { fill: #fff; stroke: #555; stroke-width: .8; }

/* type of incident */
.row-bush { margin-bottom: 57.8px; }
.multi {
  height: 52.5px;
  background: #fff;
  border: 1px solid #ccc;
  border-radius: 4px;
  box-shadow: inset 0 1px 1px rgba(0,0,0,.075);
}
.hint { margin: 0 0 25.7px; }
.panel { height: 87px; background: #eeedeb; border-top: 1px solid #e6e6e6; }
.foot {
  margin-top: 113px;
  padding: 28px 0 2px 6px;
  border-top: 1px solid #eee;
  font-size: 14px;
  line-height: 20px;
  width: 775px;
}
```
